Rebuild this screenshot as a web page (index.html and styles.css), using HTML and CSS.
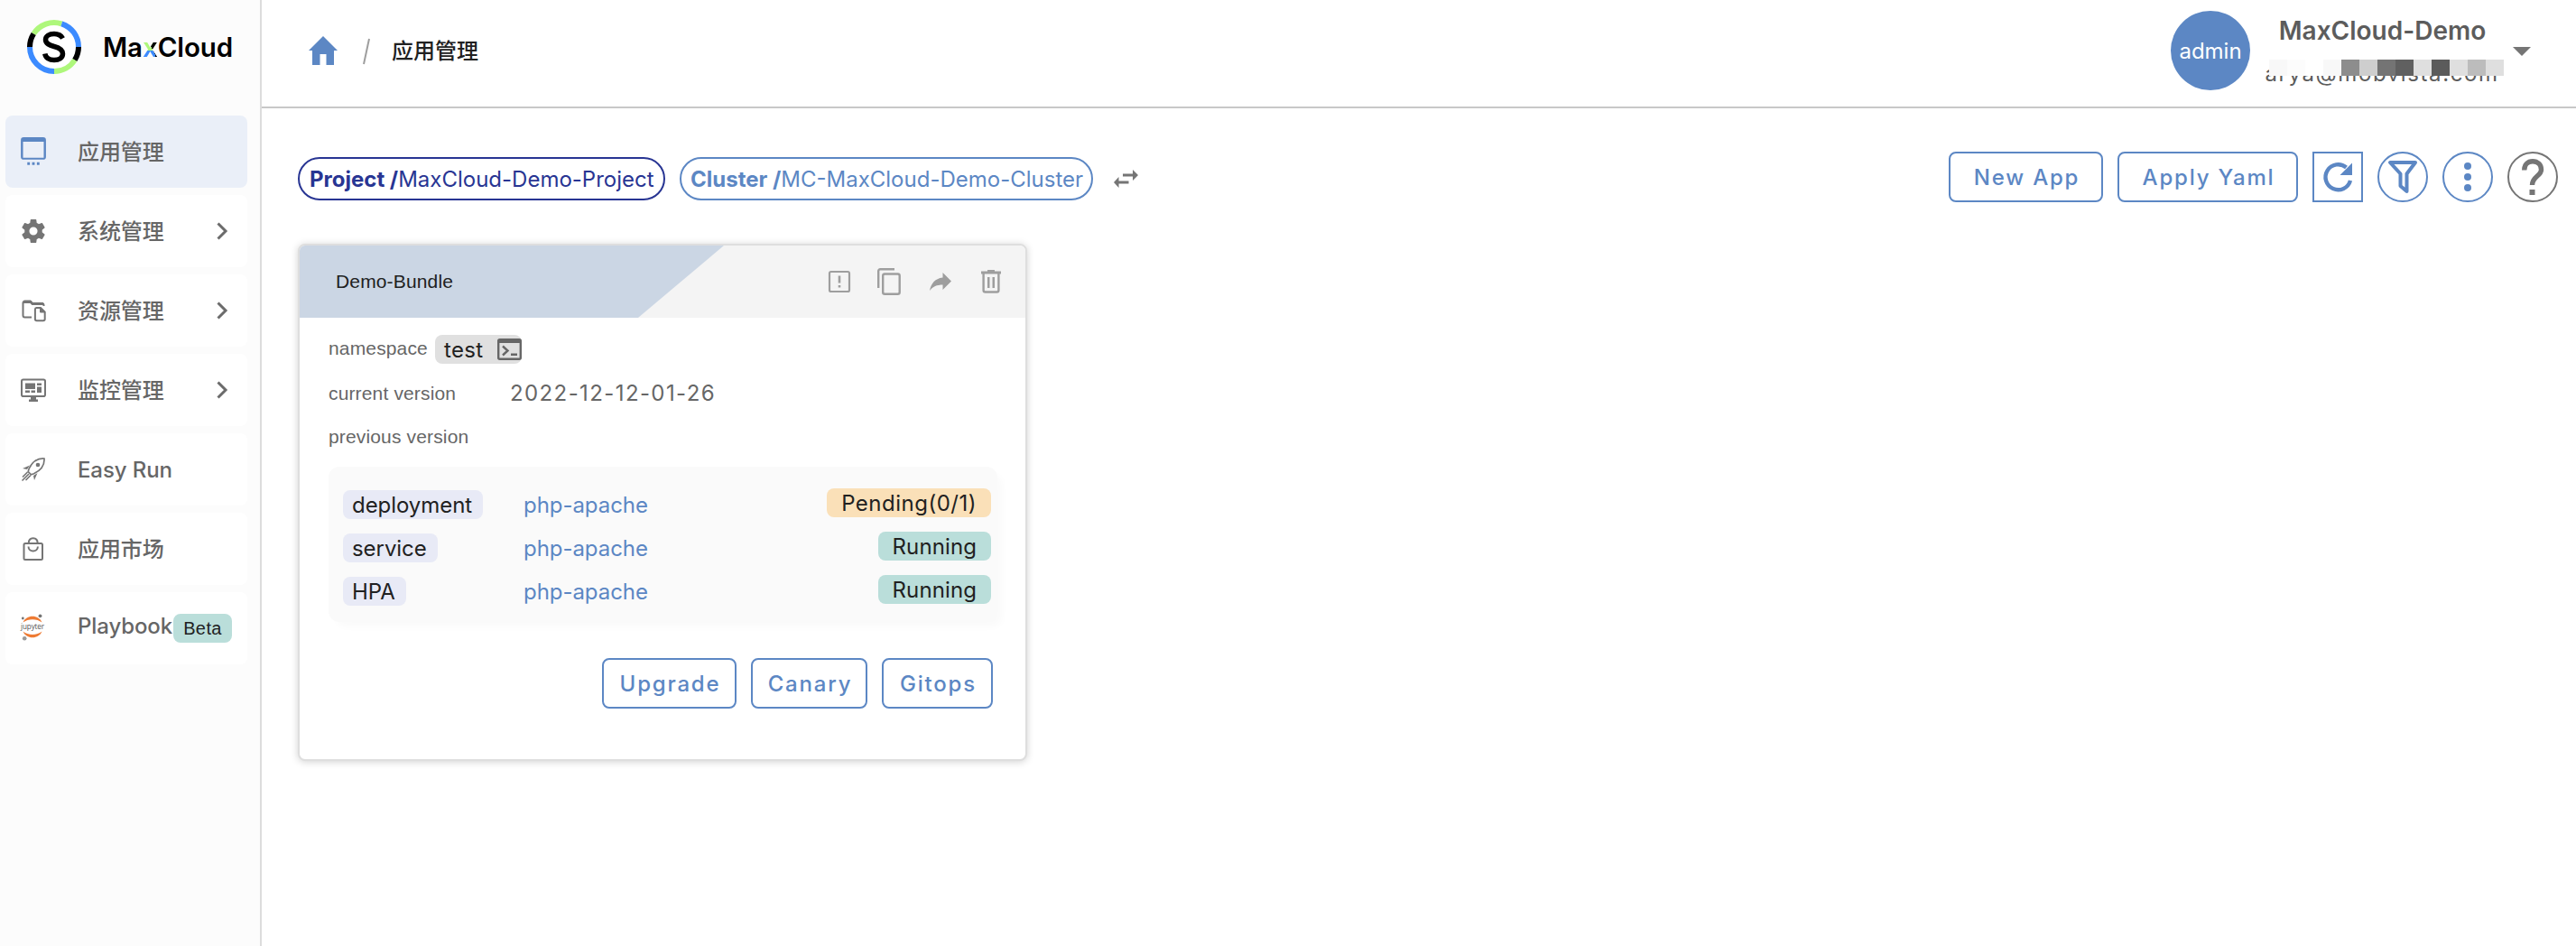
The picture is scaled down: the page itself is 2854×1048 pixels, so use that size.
FILE: index.html
```html
<!DOCTYPE html>
<html lang="zh-CN">
<head>
<meta charset="utf-8">
<title>MaxCloud</title>
<link rel="stylesheet" href="styles.css">
</head>
<body>
<div class="app">
  <aside class="sidebar">
    <div class="brand">
      <svg class="brand-mark" viewBox="0 0 60 60" stroke-width="6">
        <circle cx="30" cy="30" r="27" fill="#fff"/>
        <path d="M7.2 15.500A27 27 0 0 1 38.300 4.300" stroke="#aef77b"/>
        <path d="M38.300 4.300A27 27 0 0 1 57 30" stroke="#3c8bff"/>
        <path d="M57 30A27 27 0 0 1 52.800 44.500" stroke="#000"/>
        <path d="M52.800 44.500A27 27 0 0 1 30 57" stroke="#aef77b"/>
        <path d="M30 57A27 27 0 0 1 3 30" stroke="#3c8bff"/>
        <path d="M3 30A27 27 0 0 1 7.200 15.500" stroke="#000"/>
        <path d="M39.500 20.500C37.500 17 34 15.500 30 15.500C24.500 15.500 20.500 18 20.500 22C20.500 26.500 25 28 30 29.500C35.500 31 39.500 33 39.500 37.500C39.500 42 35.500 44.500 30 44.500C24.500 44.500 20.500 42 19.800 37.500" stroke="#000" stroke-width="5.500"/>
      </svg>
      <span class="brand-name">Ma<span class="brand-x">x</span>Cloud</span>
    </div>
    <nav class="menu">
      <a class="item active">
        <svg class="ico blue" viewBox="2.300 1 19.400 23"><path d="M19.500 1h-15A2.200 2.200 0 0 0 2.300 3.200v12.900a2.200 2.200 0 0 0 2.200 2.200h15a2.200 2.200 0 0 0 2.200-2.200V3.200A2.200 2.200 0 0 0 19.500 1zM20 16.800H4V4.500h16zM7.300 20.400h2v2h-2zM11 20.400h2v2h-2zM14.700 20.400h2v2h-2z"/></svg>
        <span>应用管理</span>
      </a>
      <a class="item">
        <svg class="ico" viewBox="2 2 20 20"><path d="M12 15.500A3.500 3.500 0 0 1 8.500 12 3.500 3.500 0 0 1 12 8.500a3.500 3.500 0 0 1 3.500 3.500 3.500 3.500 0 0 1-3.500 3.500m7.430-2.530c.04-.32.070-.64.070-.97 0-.33-.03-.66-.07-1l2.110-1.630c.19-.15.240-.42.120-.64l-2-3.460c-.12-.22-.39-.31-.61-.22l-2.490 1c-.52-.39-1.060-.73-1.690-.98l-.37-2.650A.506.506 0 0 0 14 2h-4c-.25 0-.46.180-.5.420l-.37 2.650c-.63.250-1.170.59-1.690.98l-2.490-1c-.22-.09-.49 0-.61.220l-2 3.460c-.13.220-.07.490.120.640L4.570 11c-.04.340-.07.670-.07 1 0 .33.030.65.070.97l-2.110 1.660c-.19.150-.25.420-.12.640l2 3.460c.12.220.39.300.61.220l2.490-1.010c.52.400 1.060.740 1.690.990l.37 2.650c.04.240.25.420.5.420h4c.25 0 .46-.18.500-.42l.37-2.650c.63-.26 1.170-.59 1.690-.99l2.490 1.010c.22.080.49 0 .61-.22l2-3.460c.12-.22.070-.49-.12-.64z"/></svg>
        <span>系统管理</span>
        <svg class="chev" viewBox="0 0 12 20"><path d="M1.500 1.500 10 10l-8.500 8.500"/></svg>
      </a>
      <a class="item">
        <svg class="ico line" viewBox="0 0 26 24"><path d="M11 19.500H3.500a2 2 0 0 1-2-2V3.500a2 2 0 0 1 2-2H9.500l2 2.500H23a1.800 1.800 0 0 1 1.500 1.800V7"/><path d="M2 2.500h8l2 2.200H24" stroke-width="2.800"/><path d="M16.500 9h4.500l4.700 4.700v7.800a1.800 1.800 0 0 1-1.800 1.800h-7.200a1.800 1.800 0 0 1-1.800-1.800V10.800A1.800 1.800 0 0 1 16.500 9z"/><path d="M20.500 9v5h5z" fill="currentColor" stroke-width="1"/></svg>
        <span>资源管理</span>
        <svg class="chev" viewBox="0 0 12 20"><path d="M1.500 1.500 10 10l-8.500 8.500"/></svg>
      </a>
      <a class="item">
        <svg class="ico monitor" viewBox="0 0 28 26"><rect x="1" y="1.500" width="26" height="18.500" rx="1.800" fill="none" stroke="currentColor" stroke-width="2"/><path d="M5 5.500h11v6.500H5zM18 5.500h5v2.500h-5zM18 9.500h5V16h-5zM5 13.500h5V16H5zM11.500 13.500H16V16h-4.500zM11 20h6v3.500h2V26H9v-2.500h2z"/></svg>
        <span>监控管理</span>
        <svg class="chev" viewBox="0 0 12 20"><path d="M1.500 1.500 10 10l-8.500 8.500"/></svg>
      </a>
      <a class="item">
        <svg class="ico line rocket" viewBox="0 0 26 26"><path d="M25 1C18 .5 12 4 8 12.500L7.200 15.500l3.300 3.300 3-1C21.500 14 25.500 8 25 1z" stroke-width="1.700"/><circle cx="18" cy="8" r="2.300" fill="currentColor" stroke="none"/><path d="M9 8.500 1 12l5 1zM17.500 17 14 25l-1-5z" fill="currentColor" stroke="none"/><path d="M6.500 16 1 21.500M8 18l-7.500 7.500M10 19.500 4.500 25" stroke-width="1.600"/></svg>
        <span>Easy Run</span>
      </a>
      <a class="item">
        <svg class="ico line" viewBox="0 0 24 26"><rect x="1.500" y="7" width="20.500" height="18" rx="1.500"/><path d="M6.700 7C6.700 3.500 8.500 1.200 11.700 1.200S16.700 3.500 16.700 7M6.500 10.500C6.500 17 16.900 17 16.900 10.500"/></svg>
        <span>应用市场</span>
      </a>
      <a class="item playbook">
        <svg class="ico jup" viewBox="0 0 26 30"><path d="M2.500 9.500C6 .5 20 .5 23.500 9.500 18 5 8 5 2.500 9.500zM2.500 19.500C6 28.500 20 28.500 23.500 19.500 18 24 8 24 2.500 19.500z" fill="#ee7b34"/><circle cx="21.500" cy="2.300" r="1.900"/><circle cx="2.300" cy="5" r="1.400"/><circle cx="4.200" cy="27.300" r="2.300" fill="#999"/><text x="0" y="16.800" textLength="26" lengthAdjust="spacingAndGlyphs">jupyter</text></svg>
        <span>Playbook</span><b class="beta">Beta</b>
      </a>
    </nav>
  </aside>
  <div class="main">
    <header class="top">
      <svg class="home" viewBox="0 0 32 32"><path d="M16 0 32 16h-4v16h-8.500V20h-7v12H4V16H0z"/></svg>
      <svg class="slash" viewBox="0 0 8 30"><path d="M7 1 1 29"/></svg>
      <span class="crumb">应用管理</span>
      <div class="user">
        <div class="avatar">admin</div>
        <div class="who">
          <div class="name">MaxCloud-Demo</div>
          <div class="mail"><span>arya@mobvista.com</span>
            <div class="mosaic"><i class="m1"></i><i class="m2"></i><i></i><i class="m1"></i><i class="m5"></i><i class="m4"></i><i class="m6"></i><i class="m7"></i><i class="m3"></i><i class="m8"></i><i class="m3"></i><i class="m9"></i><i class="m3"></i></div>
          </div>
        </div>
        <svg class="caret" viewBox="0 0 20 10"><path d="M0 0h20L10 10z"/></svg>
      </div>
    </header>
    <section class="toolbar">
      <div class="chip project"><b>Project /</b><span>MaxCloud-Demo-Project</span></div>
      <div class="chip cluster"><b>Cluster /</b><span>MC-MaxCloud-Demo-Cluster</span></div>
      <svg class="swap" viewBox="0 0 27 20"><path d="M10 4.500h11V0l6 6-6 6V7.500H10zM16.500 12.500h-11V8L0 14l5.500 6v-4.500h11z"/></svg>
      <div class="actions">
        <button class="btn newapp">New App</button>
        <button class="btn yaml">Apply Yaml</button>
        <button class="sq"><svg viewBox="0 0 32 32"><path d="M30 20A14 14 0 1 1 25.500 5.500" fill="none" stroke="currentColor" stroke-width="4.400"/><path d="M32 .5V14H18.500z"/></svg></button>
        <button class="round"><svg class="funnel" viewBox="0 0 32 36"><path d="M2 2h28L20.500 14.500V34L13.500 28V14.500z" fill="none" stroke="currentColor" stroke-width="4" stroke-linejoin="round"/></svg></button>
        <button class="round"><svg viewBox="0 0 32 32"><circle cx="16" cy="4" r="4"/><circle cx="16" cy="16" r="4"/><circle cx="16" cy="28" r="4"/></svg></button>
        <button class="round help"><svg viewBox="0 0 24 40"><path d="M2.700 12.500C2.700 6.500 6.500 2.700 12 2.700S21.500 6.500 21.500 12C21.500 19 11.500 19.500 11.500 29" fill="none" stroke="currentColor" stroke-width="5.400"/><path d="M8.500 34h6v6h-6z"/></svg></button>
      </div>
    </section>
    <article class="card">
      <div class="card-head">
        <div class="card-title">Demo-Bundle</div>
        <div class="card-tools">
          <svg class="t1" viewBox="0 0 24 24"><rect x="1" y="1" width="22" height="22" rx="1.800" fill="none" stroke="currentColor" stroke-width="2.200"/><path d="M10.700 5.500h2.600v8h-2.600zM10.700 16h2.600v2.500h-2.600z"/></svg>
          <svg class="t2" viewBox="0 0 26 30"><path d="M1.200 22V3.200a2 2 0 0 1 2-2H19" fill="none" stroke="currentColor" stroke-width="2.400"/><rect x="6.200" y="6.500" width="18.500" height="22.300" rx="2" fill="none" stroke="currentColor" stroke-width="2.400"/></svg>
          <svg class="t3" viewBox="0 0 24 20"><path d="M14.500 0 24 9.500 14.500 19V13.500C8 13.500 3.500 15.500 0 20 1.500 12.500 5.500 6.500 14.500 5.500z"/></svg>
          <svg class="t4" viewBox="0 0 22 26"><path d="M0 1.500h7V0h8v1.500h7v3H0zM7 8h2.500v12H7zM12.500 8H15v12h-2.500z"/><path d="M2.600 4v18.500a2 2 0 0 0 2 2h12.800a2 2 0 0 0 2-2V4" fill="none" stroke="currentColor" stroke-width="2.400"/></svg>
        </div>
      </div>
      <div class="card-body">
        <div class="meta ns"><span class="label">namespace</span><span class="nstag">test<svg viewBox="0 0 27 24"><rect x="1.200" y="1.200" width="24.600" height="21.600" rx="1.500" fill="none" stroke="currentColor" stroke-width="2.400"/><path d="M1 1h25v4H1zM15 16.500h7V19h-7z"/><path d="M6 8.500 11.500 13.500 6 18.500" fill="none" stroke="currentColor" stroke-width="2.400"/></svg></span></div>
        <div class="meta"><span class="label wide">current version</span><span class="ver">2022-12-12-01-26</span></div>
        <div class="meta"><span class="label">previous version</span></div>
        <div class="panel">
          <div class="row"><div><span class="kind">deployment</span></div><a>php-apache</a><span class="status pending">Pending(0/1)</span></div>
          <div class="row"><div><span class="kind">service</span></div><a>php-apache</a><span class="status">Running</span></div>
          <div class="row"><div><span class="kind">HPA</span></div><a>php-apache</a><span class="status">Running</span></div>
        </div>
        <div class="foot"><button class="btn upgrade">Upgrade</button><button class="btn canary">Canary</button><button class="btn gitops">Gitops</button></div>
      </div>
    </article>
  </div>
</div>
</body>
</html>
```
FILE: styles.css
```css
* { box-sizing: border-box; }
body { margin: 0; background: #fff; font-family: Inter, "Noto Sans CJK SC", sans-serif; color: #212121; }
svg { display: block; flex: none; fill: currentColor; overflow: visible; }
button { background: none; padding: 0; font-family: inherit; }
.app { display: flex; height: 1048px; overflow: hidden; }
.main { flex: 1; min-width: 0; }

.sidebar { width: 290px; flex: none; background: #fcfcfc; border-right: 2px solid #dcdcdc; }
.brand { display: flex; align-items: center; height: 128px; padding: 0 0 24px 30px; }
.brand-mark { width: 60px; height: 60px; fill: none; }
.brand-name { margin-left: 24px; font: 600 29.5px/40px Inter, sans-serif; letter-spacing: -0.1px; color: #000; white-space: nowrap; }
.brand-x { background: linear-gradient(to bottom left, #000 47%, transparent 47%), linear-gradient(#aef77b 62%, #3c8bff 62%); -webkit-background-clip: text; background-clip: text; color: transparent; }
.menu { display: flex; flex-direction: column; gap: 8px; padding: 0 14px 0 6px; }
.item { display: flex; align-items: center; height: 80px; padding-left: 18px; border-radius: 8px; background: #fff; color: #666; font-size: 24px; font-weight: 500; letter-spacing: -0.1px; white-space: nowrap; }
.item.active { background: #eaeff8; }
.item > span { line-height: 36px; padding-top: 2px; }
.item.playbook > span { padding: 0; margin-top: -4px; }
.ico { width: 26px; height: 26px; margin-right: 36px; color: #757575; }
.ico.blue { width: 28px; height: 33px; margin-right: 35px; margin-left: -1px; color: #5c87c4; }
.line { fill: none; stroke: currentColor; stroke-width: 2; }
.monitor { width: 28px; margin-left: -1px; margin-right: 35px; }
.jup { height: 30px; margin-left: -1px; margin-right: 37px; margin-top: -2px; }
.jup text { font: 9px "Open Sans", sans-serif; fill: #555; }
.chev { width: 12px; height: 20px; margin-left: auto; margin-right: 22px; fill: none; stroke: #6b6b6b; stroke-width: 3; }
.beta { display: flex; align-items: center; justify-content: center; width: 65px; height: 32px; margin-left: auto; margin-right: 17px; border-radius: 8px; background: #badeda; color: #212121; font: 400 20px/32px "Liberation Sans", Arial, sans-serif; letter-spacing: 0.4px; }

.top { display: flex; align-items: center; height: 120px; padding: 0 50px 6px 52px; border-bottom: 2px solid #c8c8c8; }
.home { width: 32px; height: 32px; color: #5c87c4; }
.slash { width: 8px; height: 30px; margin: 2px 24px 0 28px; fill: none; stroke: #9e9e9e; stroke-width: 2; }
.crumb { padding-top: 2px; font-size: 24px; font-weight: 500; line-height: 36px; }
.user { display: flex; align-items: center; margin-left: auto; }
.avatar { width: 88px; height: 88px; border-radius: 50%; background: #5c87c4; color: #fff; font-size: 24px; line-height: 89px; text-align: center; }
.who { width: 264px; margin-left: 17px; text-align: center; color: #5c5c5c; }
.name { margin: -4px 0 0 -5px; font-size: 28px; font-weight: 600; line-height: 36px; }
.mail { display: grid; height: 40px; padding-top: 4px; font-size: 24px; line-height: 38px; letter-spacing: 1.6px; }
.mail > span, .mosaic { grid-area: 1 / 1; }
.mail > span { margin: 7px 0 -7px -6px; white-space: nowrap; }
.mosaic { display: flex; z-index: 1; width: 260px; height: 18px; margin: 10px 0 0 4px; }
.mosaic i { width: 20px; background: #fff; }
.mosaic .m1 { background: #f8f8f8; }
.mosaic .m2 { background: #fcfcfc; }
.mosaic .m3 { background: #dfdfdf; }
.mosaic .m4 { background: #cecece; }
.mosaic .m5 { background: #8d8d8d; }
.mosaic .m6 { background: #747474; }
.mosaic .m7 { background: #606060; }
.mosaic .m8 { background: #5b5b5b; }
.mosaic .m9 { background: #bcbcbc; }
.caret { width: 20px; height: 10px; margin: 2px 0 0 10px; color: #757575; }

.toolbar { display: flex; align-items: center; height: 56px; margin: 48px 20px 0 40px; }
.chip { display: flex; align-items: center; height: 48px; border: 2px solid; border-radius: 24px; padding-left: 11px; margin-top: 4px; font-size: 24px; white-space: nowrap; }
.chip b { font-weight: 700; }
.project { width: 407px; color: #283593; }
.cluster { width: 458px; margin-left: 16px; padding-left: 10px; color: #5c87c4; }
.swap { width: 27px; height: 20px; margin-left: 23px; margin-top: 3px; color: #757575; }
.actions { display: flex; gap: 16px; margin-left: auto; }
.btn { height: 56px; padding-left: 2px; border: 2px solid #5c87c4; border-radius: 8px; color: #5c87c4; font-size: 24px; font-weight: 500; letter-spacing: 1.8px; text-align: center; white-space: nowrap; }
.newapp { width: 171px; }
.yaml { width: 200px; }
.sq, .round { display: grid; place-items: center; width: 56px; height: 56px; border: 2px solid; color: #5c87c4; }
.round { border-radius: 50%; }
.sq svg, .round svg { width: 32px; height: 32px; }
.round .funnel { height: 36px; }
.round.help { color: #757575; }
.help svg { width: 24px; height: 40px; }

.card { width: 808px; height: 573px; margin: 46px 0 0 40px; border: 2px solid #dedede; border-radius: 8px; overflow: hidden; background: #fff; box-shadow: 0 1px 8px rgba(0, 0, 0, 0.18); }
.card-head { display: flex; justify-content: space-between; align-items: center; height: 80px; background: #f4f4f4; }
.card-title { width: 470px; height: 80px; padding-left: 40px; background: #cbd6e4; clip-path: polygon(0 0, 100% 0, 375px 100%, 0 100%); font: 21px/80px "Liberation Sans", Arial, sans-serif; letter-spacing: 0.15px; }
.card-tools { display: flex; align-items: center; margin-right: 27px; color: #9e9e9e; }
.t1 { width: 24px; height: 24px; margin-right: 30px; }
.t2 { width: 26px; height: 30px; margin-right: 32px; }
.t3 { width: 24px; height: 20px; margin-right: 33px; }
.t4 { width: 22px; height: 26px; }
.card-body { padding: 10px 24px 0 32px; }
.meta { display: flex; align-items: center; height: 48px; color: #666; }
.meta.ns { height: 50px; }
.label { font: 21px/24px "Liberation Sans", Arial, sans-serif; letter-spacing: 0.15px; }
.label.wide { width: 201px; }
.ns .label { width: 110px; margin-top: -3px; }
.nstag { display: flex; align-items: center; justify-content: space-between; width: 96px; height: 32px; margin-left: 8px; padding-left: 10px; border-radius: 8px; background: #e0e0e0; color: #212121; font-size: 24px; letter-spacing: 0.3px; }
.nstag svg { width: 27px; height: 24px; color: #666; }
.ver { font-size: 24px; letter-spacing: 1.4px; margin-top: -1px; }
.panel { display: flex; flex-direction: column; gap: 16px; width: 741px; height: 172px; margin-top: 9px; padding: 24px 0 0 16px; border-radius: 12px; background: #fafafa; box-shadow: 7px 7px 10px -2px rgba(0, 0, 0, 0.025); }
.row { display: grid; grid-template-columns: 200px 1fr auto; height: 32px; padding-right: 7px; font-size: 24px; line-height: 34px; letter-spacing: -0.05px; }
.row > div, .row a { margin-top: 2px; }
.kind { display: inline-block; height: 32px; padding: 0 12px 0 10px; border-radius: 8px; background: #e8eaf6; }
.row a { color: #5c87c4; }
.status { height: 32px; padding: 0 16px; border-radius: 8px; background: #badeda; letter-spacing: 0.1px; }
.status.pending { background: #fae0b8; letter-spacing: 0.5px; }
.foot { display: flex; justify-content: flex-end; gap: 16px; margin: 40px 12px 0 0; }
.upgrade { width: 149px; }
.canary { width: 129px; }
.gitops { width: 123px; }
```
